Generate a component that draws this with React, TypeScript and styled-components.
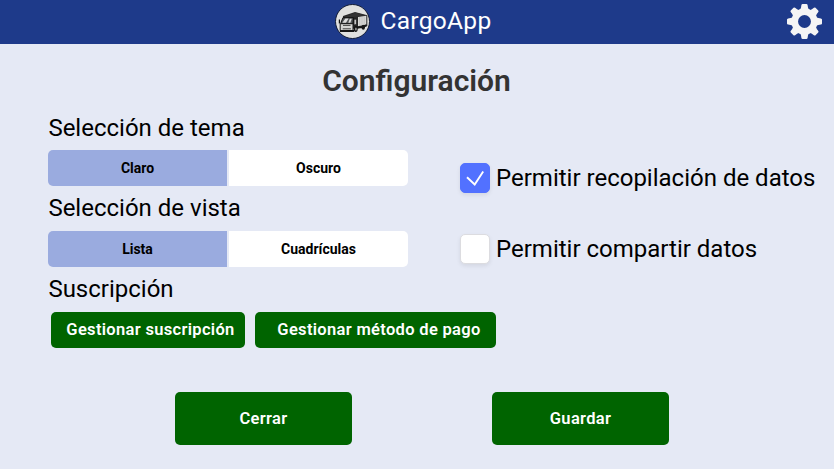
import React, { useState } from "react";
import styled, { createGlobalStyle } from "styled-components";

const GlobalStyle = createGlobalStyle`
  * { box-sizing: border-box; }
  body { margin: 0; background: #e5e9f5; font-family: Roboto, sans-serif; color: #000; }
  button { border: 0; padding: 0; font-family: inherit; cursor: pointer; }
`;

const Page = styled.div`
  width: 834px;
  height: 469px;
  overflow: hidden;
  display: flex;
  flex-direction: column;
  background: #e5e9f5;
`;

const Header = styled.header`
  height: 44px;
  flex: none;
  display: grid;
  grid-template-columns: 1fr auto 1fr;
  align-items: center;
  padding: 0 12px 1px 4px;
  background: #1e3a8a;
`;

const Brand = styled.div`
  grid-column: 2;
  display: flex;
  align-items: center;
  gap: 11px;
  color: #fff;
  svg { display: block; }
`;

const BrandName = styled.span`
  padding-bottom: 2px;
  font-size: 24.5px;
  line-height: 28px;
  letter-spacing: 0.3px;
  white-space: nowrap;
`;

const SettingsButton = styled.button`
  justify-self: end;
  width: 35px;
  height: 35px;
  background: none;
  svg { display: block; }
`;

const Title = styled.h1`
  margin: 19px 0 0;
  height: 36px;
  padding-right: 1px;
  font-size: 30px;
  line-height: 36px;
  font-weight: 600;
  text-align: center;
  color: #333;
`;

const Content = styled.main`
  display: grid;
  grid-template-columns: 448px 1fr;
  padding-left: 12px;
  height: 249px;
`;

const Options = styled.section`
  padding: 15px 0 0 36px;
`;

const Label = styled.h2<{ $gap: number }>`
  margin: 0 0 ${(p) => p.$gap}px;
  padding-left: 0.4px;
  height: 28px;
  font-size: 24px;
  line-height: 28px;
  font-weight: 400;
  white-space: nowrap;
`;

const Segmented = styled.div<{ $gap: number }>`
  display: grid;
  grid-template-columns: 179px 179px;
  gap: 2px;
  width: 360px;
  height: 36px;
  margin-bottom: ${(p) => p.$gap}px;
  border-radius: 5px;
  overflow: hidden;
`;

const Segment = styled.button<{ $active: boolean }>`
  background: ${(p) => (p.$active ? "#9aabdf" : "#fff")};
  color: #000;
  font-size: 14px;
  font-weight: 700;
  line-height: 36px;
`;

const ManageRow = styled.div`
  display: flex;
  gap: 10px;
  margin-left: 3px;
`;

const Action = styled.button<{ $w: number; $h: number; $shift?: number; $lift?: number }>`
  flex: none;
  width: ${(p) => p.$w}px;
  height: ${(p) => p.$h}px;
  padding: 0 0 ${(p) => p.$lift ?? 0}px ${(p) => p.$shift ?? 0}px;
  border-radius: 5px;
  background: #006400;
  color: #fff;
  font-size: 16.5px;
  font-weight: 600;
  letter-spacing: 0.32px;
  white-space: nowrap;
`;

const Permissions = styled.section`
  display: flex;
  flex-direction: column;
  gap: 41px;
  padding-top: 64px;
`;

const CheckRow = styled.label`
  display: flex;
  align-items: center;
  gap: 6px;
  height: 30px;
  font-size: 24px;
  line-height: 30px;
  white-space: nowrap;
  cursor: pointer;
`;

const Box = styled.button<{ $checked: boolean }>`
  flex: none;
  width: 30px;
  height: 30px;
  border-radius: 5px;
  border: 1px solid ${(p) => (p.$checked ? "#5271ff" : "#dcdce0")};
  background: ${(p) => (p.$checked ? "#5271ff" : "#fff")};
  box-shadow: 0 2px 4px rgba(0, 0, 0, 0.08);
  svg { display: block; }
`;

const Footer = styled.footer`
  display: flex;
  justify-content: center;
  gap: 140px;
  margin-top: 44px;
  padding-left: 10px;
`;

function TruckLogo() {
  return (
    <svg width="35" height="35" viewBox="0 0 35 35">
      <circle cx="17.5" cy="17.5" r="17" fill="#e1e1df" stroke="#111b36" />
      <path d="M8 12 20 8l12.3 3.2v10.8l-10 2.8H7z" fill="#292929" />
      <path d="m23 13 8.3-1.2v8.7L23 22.3z" fill="#d9d9d6" />
      <path d="m10.5 12.2 10.5-3.5 9.3 2.5-8.3 1.3-12 1z" fill="#333" />
      <path d="M24.8 13v9M27 12.7v8.8M29.2 12.4v8.3" stroke="#aaa" strokeWidth=".5" />
      <path d="M6.2 18 8 13.7h10.5l-.6 6H5.8z" fill="#55585a" stroke="#111" />
      <path d="m7.4 18.8 3-4.3h3.2l-2.6 4.3zM14.8 14.7h2l-1.5 4h-2z" fill="#ddd" />
      <path d="M5.2 19.7H18v6.8H5.2z" fill="#d5d5d3" stroke="#171717" />
      <path d="M8 21.4h7.5M7.7 24.8h8.2" stroke="#333" strokeWidth=".9" />
      <path d="M19 15.2h2.6v5.3L19 21z" fill="#c5c5c5" stroke="#111" strokeWidth=".7" />
      <path d="M5 27h14M20 23.3h6.5l5-2" fill="none" stroke="#161616" strokeWidth="1.8" />
      <ellipse cx="20.7" cy="25" rx="2" ry="3" fill="#151515" />
      <ellipse cx="20.9" cy="25" rx=".8" ry="1.5" fill="#aaa" />
      <ellipse cx="28.3" cy="23.2" rx="1.7" ry="2.5" fill="#151515" />
      <path d="M4.4 15.5v4" stroke="#111" strokeWidth="1.2" />
    </svg>
  );
}

function Gear() {
  return (
    <svg width="35" height="35" viewBox="-17.6 -17.6 35.2 35.2">
      <g fill="#f5f5f5">
        {[0, 45, 90, 135, 180, 225, 270, 315].map((angle) => (
          <path
            key={angle}
            transform={`rotate(${angle})`}
            d="M-5.4-11.5Q-3.8-12-3.5-14L-3.1-16.5Q-2.9-17.6-1.9-17.6H1.9Q2.9-17.6 3.1-16.5L3.5-14Q3.8-12 5.4-11.5V-8H-5.4Z"
          />
        ))}
        <path fillRule="evenodd" d="M0-13a13 13 0 1 1 0 26a13 13 0 1 1 0-26ZM0-6.5a6.5 6.5 0 1 0 0 13a6.5 6.5 0 1 0 0-13Z" />
      </g>
    </svg>
  );
}

function Check() {
  return (
    <svg width="28" height="28" viewBox="0 0 28 28">
      <path d="m6 13.2 7.7 7.3L22.2 7.5" fill="none" stroke="#fff" strokeWidth="1.9" />
    </svg>
  );
}

function Toggle({ items, gap }: { items: string[]; gap: number }) {
  const [selected, setSelected] = useState(0);
  return (
    <Segmented $gap={gap}>
      {items.map((item, index) => (
        <Segment key={item} $active={selected === index} onClick={() => setSelected(index)}>
          {item}
        </Segment>
      ))}
    </Segmented>
  );
}

function Permission({ text, initial }: { text: string; initial: boolean }) {
  const [checked, setChecked] = useState(initial);
  return (
    <CheckRow>
      <Box role="checkbox" aria-checked={checked} $checked={checked} onClick={() => setChecked(!checked)}>
        {checked && <Check />}
      </Box>
      {text}
    </CheckRow>
  );
}

export default function App() {
  return (
    <>
      <GlobalStyle />
      <Page>
        <Header>
          <Brand>
            <TruckLogo />
            <BrandName>CargoApp</BrandName>
          </Brand>
          <SettingsButton aria-label="Configuración"><Gear /></SettingsButton>
        </Header>
        <Title>Configuración</Title>
        <Content>
          <Options>
            <Label $gap={8}>Selección de tema</Label>
            <Toggle items={["Claro", "Oscuro"]} gap={8} />
            <Label $gap={9}>Selección de vista</Label>
            <Toggle items={["Lista", "Cuadrículas"]} gap={8} />
            <Label $gap={9}>Suscripción</Label>
            <ManageRow>
              <Action $w={194} $h={36} $shift={5} $lift={1}>Gestionar suscripción</Action>
              <Action $w={241} $h={36} $shift={7} $lift={1}>Gestionar método de pago</Action>
            </ManageRow>
          </Options>
          <Permissions>
            <Permission text="Permitir recopilación de datos" initial={true} />
            <Permission text="Permitir compartir datos" initial={false} />
          </Permissions>
        </Content>
        <Footer>
          <Action $w={177} $h={53}>Cerrar</Action>
          <Action $w={177} $h={53}>Guardar</Action>
        </Footer>
      </Page>
    </>
  );
}
